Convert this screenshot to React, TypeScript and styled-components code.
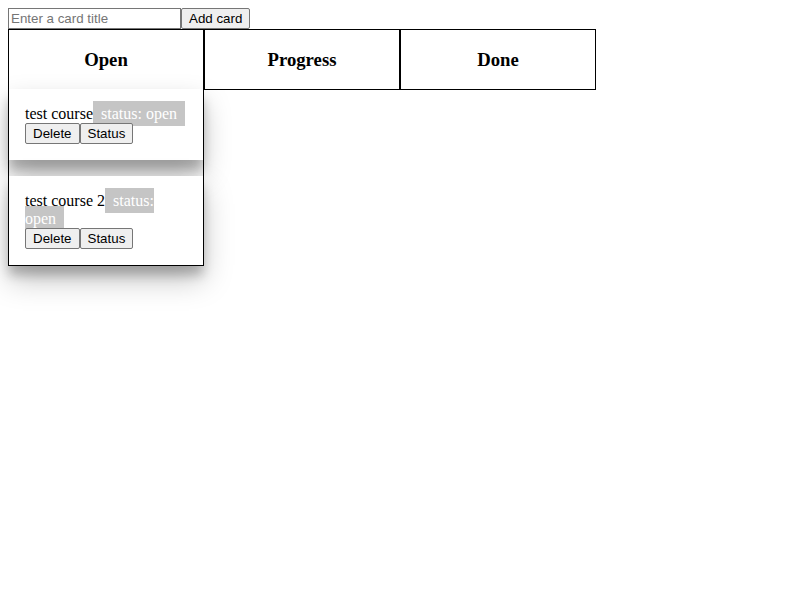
import { useState } from "react";
import styled, { createGlobalStyle } from "styled-components";

const GlobalStyle = createGlobalStyle`
  body {
    margin: 0;
    font-family: "Liberation Serif", "Times New Roman", serif;
    font-size: 16px;
    color: #000;
    background: #fff;
  }
  input, button {
    font-family: "Liberation Sans", Arial, sans-serif;
    font-size: 13.333px;
  }
`;

const Page = styled.div`
  box-sizing: border-box;
  min-height: 100vh;
  padding: 8px;
`;

const Form = styled.form`
  display: flex;
`;

const TitleInput = styled.input`
  box-sizing: border-box;
  width: 173px;
  height: 21px;
  margin: 0;
  padding: 1px 2px;
  border: 1px solid #767676;
  border-radius: 0;
`;

const Button = styled.button`
  height: 21px;
  margin: 0;
  padding: 1px 7px;
  border: 1px solid #767676;
  border-radius: 2px;
  background: #efefef;
  color: #000;
`;

const Board = styled.div`
  display: flex;
  align-items: flex-start;
`;

const Column = styled.div`
  box-sizing: border-box;
  width: 25%;
  border: 1px solid #000;
`;

const ColumnTitle = styled.h3`
  margin: 18.72px 0;
  font-size: 18.72px;
  font-weight: bold;
  text-align: center;
`;

const Card = styled.div`
  margin-top: 16px;
  padding: 16px;
  background: #fff;
  box-shadow: 0 14px 28px rgba(0, 0, 0, 0.25), 0 10px 10px rgba(0, 0, 0, 0.22);
`;

const Status = styled.span`
  padding: 4px 8px;
  background: #c5c5c5;
  color: #fff;
`;

const Actions = styled.div`
  display: flex;
`;

type Stage = "open" | "progress" | "done";

interface ICard {
  id: number;
  title: string;
  status: Stage;
}

const columns: { key: Stage; label: string }[] = [
  { key: "open", label: "Open" },
  { key: "progress", label: "Progress" },
  { key: "done", label: "Done" },
];

function App() {
  const [title, setTitle] = useState("");
  const [cards, setCards] = useState<ICard[]>([
    { id: 1, title: "test course", status: "open" },
    { id: 2, title: "test course 2", status: "open" },
  ]);

  const addCard = (e: React.FormEvent) => {
    e.preventDefault();
    if (!title.trim()) return;
    setCards([...cards, { id: Date.now(), title, status: "open" }]);
    setTitle("");
  };

  const nextStatus = (id: number) => {
    const order: Stage[] = ["open", "progress", "done"];
    setCards(cards.map(c => c.id === id ? { ...c, status: order[(order.indexOf(c.status) + 1) % 3] } : c));
  };

  return (
    <Page>
      <GlobalStyle />
      <Form onSubmit={addCard}>
        <TitleInput placeholder="Enter a card title" value={title} onChange={e => setTitle(e.target.value)} />
        <Button type="submit">Add card</Button>
      </Form>
      <Board>
        {columns.map(col => (
          <Column key={col.key}>
            <ColumnTitle>{col.label}</ColumnTitle>
            {cards.filter(c => c.status === col.key).map(card => (
              <Card key={card.id}>
                {card.title}<Status>status: {card.status}</Status>
                <Actions>
                  <Button onClick={() => setCards(cards.filter(c => c.id !== card.id))}>Delete</Button>
                  <Button onClick={() => nextStatus(card.id)}>Status</Button>
                </Actions>
              </Card>
            ))}
          </Column>
        ))}
      </Board>
    </Page>
  );
}

export default App;
